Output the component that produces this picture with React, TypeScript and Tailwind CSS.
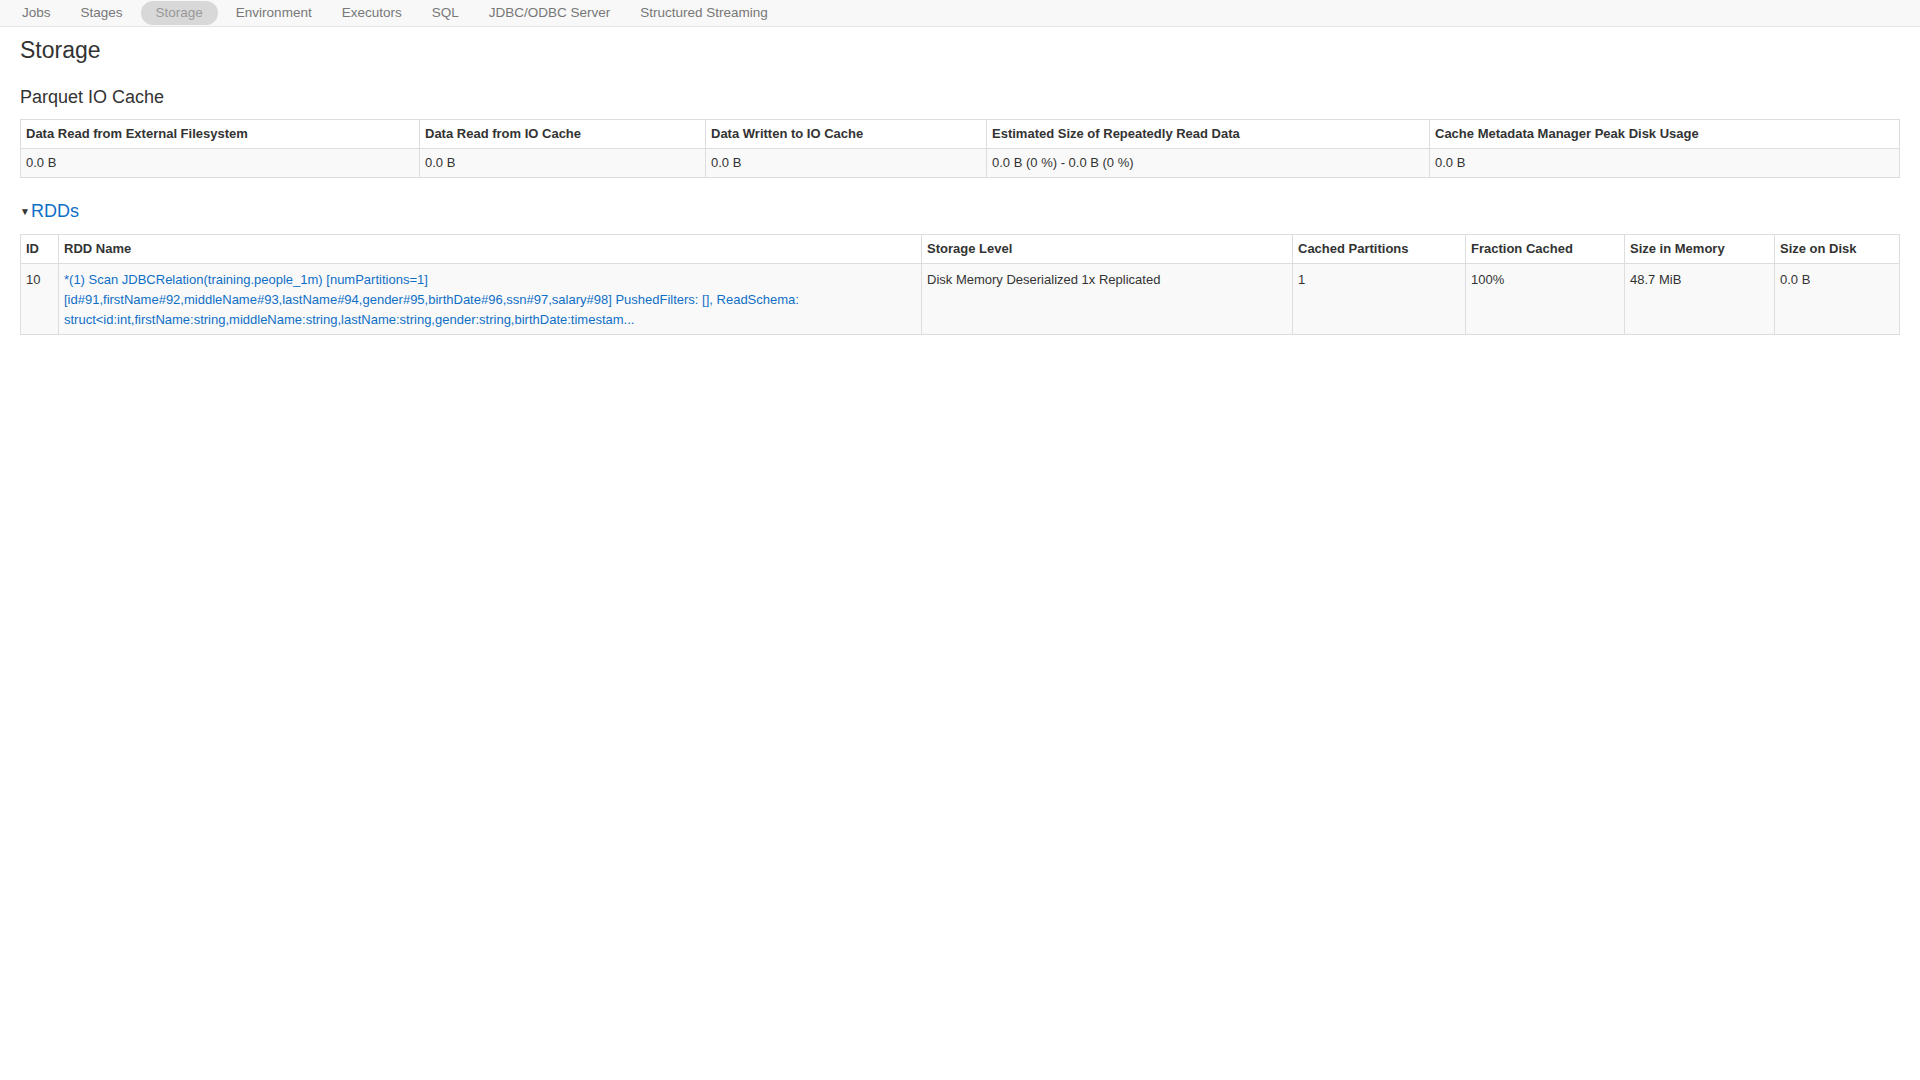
import React from 'react';

const tabs = ['Jobs', 'Stages', 'Storage', 'Environment', 'Executors', 'SQL', 'JDBC/ODBC Server', 'Structured Streaming'];

const cacheCols = [
  { h: 'Data Read from External Filesystem', v: '0.0 B', w: 'w-[399px]' },
  { h: 'Data Read from IO Cache', v: '0.0 B', w: 'w-[286px]' },
  { h: 'Data Written to IO Cache', v: '0.0 B', w: 'w-[281px]' },
  { h: 'Estimated Size of Repeatedly Read Data', v: '0.0 B (0 %) - 0.0 B (0 %)', w: 'w-[443px]' },
  { h: 'Cache Metadata Manager Peak Disk Usage', v: '0.0 B', w: '' },
];

export default function App() {
  return (
    <div className="min-h-screen bg-white text-[#333] text-[14px]" style={{ fontFamily: '"Liberation Sans", Arial, sans-serif' }}>
      <nav className="h-[27px] bg-[#f8f8f8] border-b border-[#e5e5e5] flex items-center px-[10px] gap-[6px]">
        {tabs.map((t) => (
          <span
            key={t}
            className={`px-[12px] py-[2px] text-[13.5px] text-[#777] rounded-full ${t === 'Storage' ? 'bg-[#d8d8d8] text-[#999] px-[15px]' : ''}`}
          >
            {t}
          </span>
        ))}
      </nav>
      <div className="px-[20px]">
        <h3 className="text-[23px] mt-[6px] leading-[34px] text-[#333]">Storage</h3>
        <h4 className="text-[18px] mt-[18px] leading-[24px]">Parquet IO Cache</h4>
        <table className="w-full mt-[10px] border border-[#ddd] border-collapse text-[13px]">
          <thead>
            <tr className="h-[29px]">
              {cacheCols.map((c) => (
                <th key={c.h} className={`${c.w} border border-[#ddd] text-left font-bold px-[5px]`}>{c.h}</th>
              ))}
            </tr>
          </thead>
          <tbody>
            <tr className="h-[29px] bg-[#f9f9f9]">
              {cacheCols.map((c) => (
                <td key={c.h} className="border border-[#ddd] px-[5px]">{c.v}</td>
              ))}
            </tr>
          </tbody>
        </table>
        <div className="mt-[20px] text-[18px] text-[#0f6fc6] flex items-center">
          <span className="text-[#333] text-[10px] mr-[1px]">▼</span>RDDs
        </div>
        <table className="w-full mt-[9px] border border-[#ddd] border-collapse text-[13px]">
          <thead>
            <tr className="h-[29px]">
              <th className="w-[38px] border border-[#ddd] text-left font-bold px-[5px]">ID</th>
              <th className="w-[863px] border border-[#ddd] text-left font-bold px-[5px]">RDD Name</th>
              <th className="w-[371px] border border-[#ddd] text-left font-bold px-[5px]">Storage Level</th>
              <th className="w-[173px] border border-[#ddd] text-left font-bold px-[5px]">Cached Partitions</th>
              <th className="w-[159px] border border-[#ddd] text-left font-bold px-[5px]">Fraction Cached</th>
              <th className="w-[150px] border border-[#ddd] text-left font-bold px-[5px]">Size in Memory</th>
              <th className="border border-[#ddd] text-left font-bold px-[5px]">Size on Disk</th>
            </tr>
          </thead>
          <tbody>
            <tr className="bg-[#f9f9f9] align-top">
              <td className="border border-[#ddd] px-[5px] pt-[6px] pb-[4px]">10</td>
              <td className="border border-[#ddd] px-[5px] pt-[6px] pb-[4px] leading-[20px] text-[#0f6fc6]">
                *(1) Scan JDBCRelation(training.people_1m) [numPartitions=1]
                <br />
                [id#91,firstName#92,middleName#93,lastName#94,gender#95,birthDate#96,ssn#97,salary#98] PushedFilters: [], ReadSchema:
                <br />
                struct&lt;id:int,firstName:string,middleName:string,lastName:string,gender:string,birthDate:timestam...
              </td>
              <td className="border border-[#ddd] px-[5px] pt-[6px]">Disk Memory Deserialized 1x Replicated</td>
              <td className="border border-[#ddd] px-[5px] pt-[6px]">1</td>
              <td className="border border-[#ddd] px-[5px] pt-[6px]">100%</td>
              <td className="border border-[#ddd] px-[5px] pt-[6px]">48.7 MiB</td>
              <td className="border border-[#ddd] px-[5px] pt-[6px]">0.0 B</td>
            </tr>
          </tbody>
        </table>
      </div>
    </div>
  );
}
